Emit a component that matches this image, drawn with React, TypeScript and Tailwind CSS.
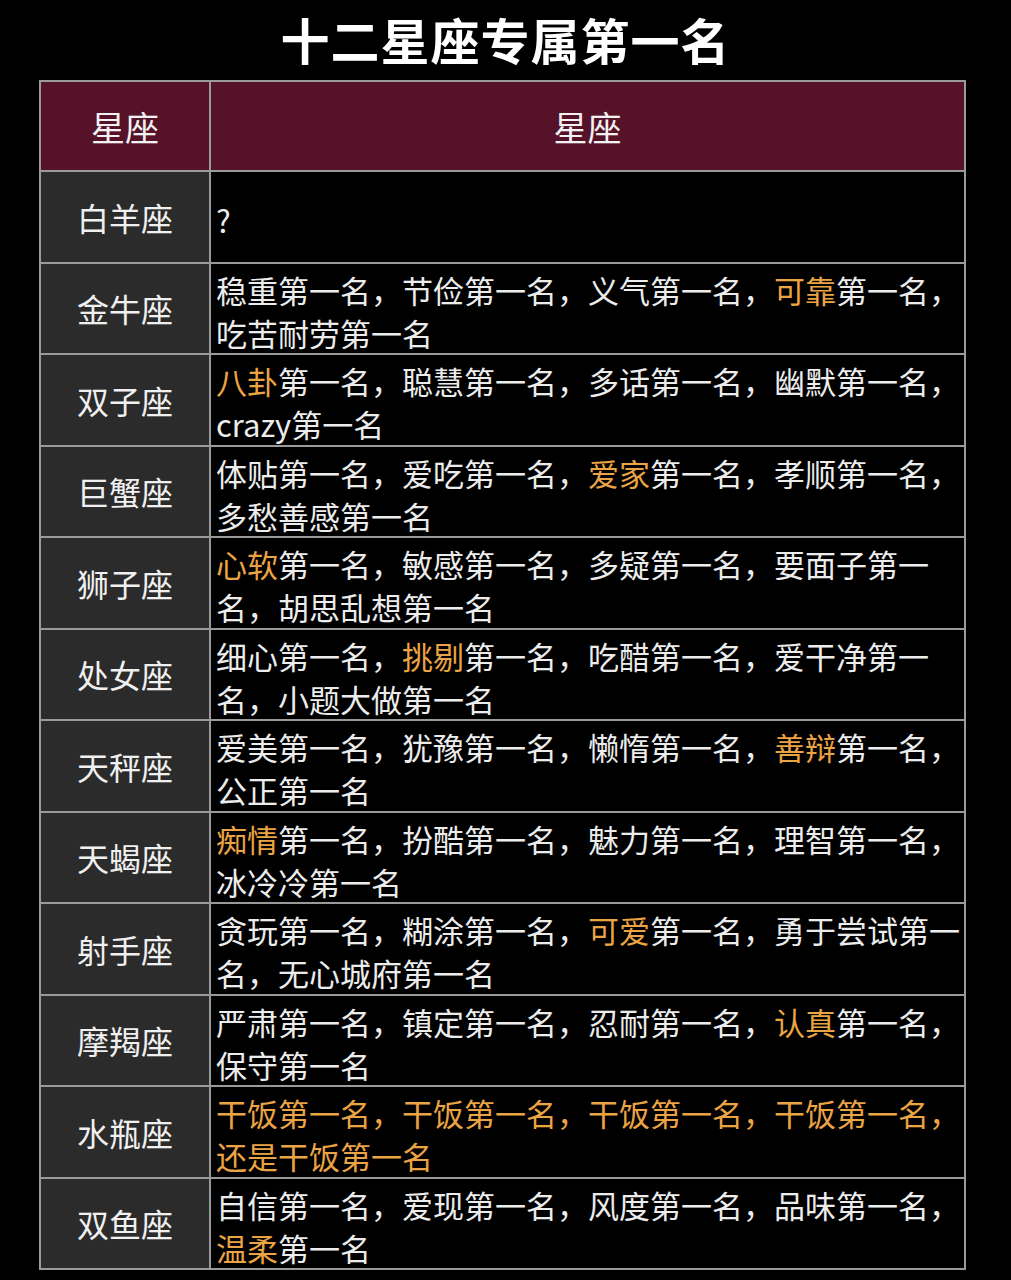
import React from "react";

type Seg = { t: string; h?: boolean };
const rows: { name: string; segs: Seg[] }[] = [
  { name: "白羊座", segs: [{ t: "?" }] },
  { name: "金牛座", segs: [{ t: "稳重第一名，节俭第一名，义气第一名，" }, { t: "可靠", h: true }, { t: "第一名，吃苦耐劳第一名" }] },
  { name: "双子座", segs: [{ t: "八卦", h: true }, { t: "第一名，聪慧第一名，多话第一名，幽默第一名，crazy第一名" }] },
  { name: "巨蟹座", segs: [{ t: "体贴第一名，爱吃第一名，" }, { t: "爱家", h: true }, { t: "第一名，孝顺第一名，多愁善感第一名" }] },
  { name: "狮子座", segs: [{ t: "心软", h: true }, { t: "第一名，敏感第一名，多疑第一名，要面子第一名，胡思乱想第一名" }] },
  { name: "处女座", segs: [{ t: "细心第一名，" }, { t: "挑剔", h: true }, { t: "第一名，吃醋第一名，爱干净第一名，小题大做第一名" }] },
  { name: "天秤座", segs: [{ t: "爱美第一名，犹豫第一名，懒惰第一名，" }, { t: "善辩", h: true }, { t: "第一名，公正第一名" }] },
  { name: "天蝎座", segs: [{ t: "痴情", h: true }, { t: "第一名，扮酷第一名，魅力第一名，理智第一名，冰冷冷第一名" }] },
  { name: "射手座", segs: [{ t: "贪玩第一名，糊涂第一名，" }, { t: "可爱", h: true }, { t: "第一名，勇于尝试第一名，无心城府第一名" }] },
  { name: "摩羯座", segs: [{ t: "严肃第一名，镇定第一名，忍耐第一名，" }, { t: "认真", h: true }, { t: "第一名，保守第一名" }] },
  { name: "水瓶座", segs: [{ t: "干饭第一名，干饭第一名，干饭第一名，干饭第一名，还是干饭第一名", h: true }] },
  { name: "双鱼座", segs: [{ t: "自信第一名，爱现第一名，风度第一名，品味第一名，" }, { t: "温柔", h: true }, { t: "第一名" }] },
];

export default function App() {
  return (
    <div
      className="w-[1011px] h-[1280px] bg-black text-[#ececec] overflow-hidden"
      style={{ fontFamily: '"Noto Sans CJK SC", "Noto Sans", sans-serif' }}
    >
      <div className="h-[80px] flex items-center justify-center">
        <h1 className="text-[49px] font-bold text-white leading-none tracking-[1px] -mt-[4px]">十二星座专属第一名</h1>
      </div>
      <div className="ml-[39px] w-[927px] bg-[#9a9a9a] p-[2px] grid grid-cols-[168px_1fr] gap-[2px]">
        <div className="h-[88px] bg-[#561229] flex items-center justify-center text-[34px] text-[#f2f2f2]">星座</div>
        <div className="h-[88px] bg-[#561229] flex items-center justify-center text-[34px] text-[#f2f2f2]">星座</div>
        {rows.map((r) => (
          <React.Fragment key={r.name}>
            <div className="h-[89.5px] bg-[#2b2b2b] flex items-center justify-center text-[32px] text-[#f0f0f0]">
              {r.name}
            </div>
            <div className="h-[89.5px] bg-black flex items-center pl-[5px] pr-0 pt-[5px]">
              <p className="text-[31px] leading-[43px] break-all">
                {r.segs.map((s, i) => (
                  <span key={i} className={s.h ? "text-[#eba444]" : "text-[#ececec]"}>
                    {s.t}
                  </span>
                ))}
              </p>
            </div>
          </React.Fragment>
        ))}
      </div>
    </div>
  );
}
